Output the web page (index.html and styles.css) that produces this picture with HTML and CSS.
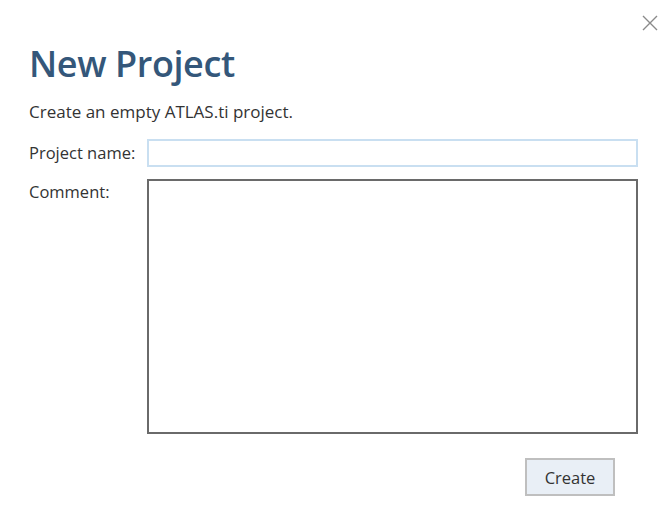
FILE: index.html
```html
<!DOCTYPE html>
<html>
<head>
<meta charset="utf-8">
<link rel="stylesheet" href="styles.css">
</head>
<body>
<div class="dialog">
  <button class="close" aria-label="Close">
    <svg width="16" height="16" viewBox="0 0 16 16"><path d="M1 1L15 15M15 1L1 15" stroke="#8a8a8a" stroke-width="1.4" fill="none"/></svg>
  </button>
  <h1 class="title">New Project</h1>
  <p class="desc">Create an empty ATLAS.ti project.</p>
  <div class="form">
    <label class="label">Project name:</label>
    <input class="name-input" type="text">
    <label class="label comment-label">Comment:</label>
    <textarea class="comment"></textarea>
  </div>
  <div class="actions">
    <button class="create">Create</button>
  </div>
</div>
</body>
</html>
```
FILE: styles.css
```css
html, body {
  margin: 0;
  padding: 0;
  background: #ffffff;
}
body {
  width: 667px;
  height: 523px;
  overflow: hidden;
  font-family: "Open Sans", "Noto Sans", sans-serif;
  color: #333333;
}
.dialog {
  position: relative;
  box-sizing: border-box;
  height: 523px;
  padding: 42px 29px 0 29px;
  display: flex;
  flex-direction: column;
}
.close {
  position: absolute;
  top: 14px;
  right: 8px;
  width: 18px;
  height: 18px;
  padding: 0;
  border: 0;
  background: transparent;
  display: flex;
  align-items: center;
  justify-content: center;
}
.title {
  margin: 0;
  font-size: 36px;
  line-height: 44px;
  font-weight: 600;
  color: #34577a;
  letter-spacing: -0.4px;
}
.desc {
  margin: 15px 0 0 0;
  font-size: 17px;
  line-height: 22px;
  color: #333333;
}
.form {
  margin-top: 16px;
  display: grid;
  grid-template-columns: 118px 491px;
  grid-template-rows: 28px 255px;
  row-gap: 12px;
}
.label {
  font-size: 16.5px;
  line-height: 22px;
  color: #333333;
  padding-top: 3px;
}
.comment-label {
  padding-top: 2px;
}
.name-input {
  box-sizing: border-box;
  width: 491px;
  height: 28px;
  border: 2px solid #c9dff1;
  margin: 0;
  padding: 0 4px;
  outline: none;
  font: inherit;
}
.comment {
  box-sizing: border-box;
  width: 491px;
  height: 255px;
  border: 2px solid #6a6a6a;
  margin: 0;
  padding: 4px;
  resize: none;
  outline: none;
  font: inherit;
}
.actions {
  display: flex;
  justify-content: flex-end;
  padding-right: 23px;
  margin-top: 24px;
}
.create {
  box-sizing: border-box;
  width: 90px;
  height: 38px;
  background: #e9eff6;
  border: 2px solid #bfbfbf;
  font-family: "Open Sans", "Noto Sans", sans-serif;
  font-size: 16.5px;
  color: #333333;
  padding: 0;
}
```
